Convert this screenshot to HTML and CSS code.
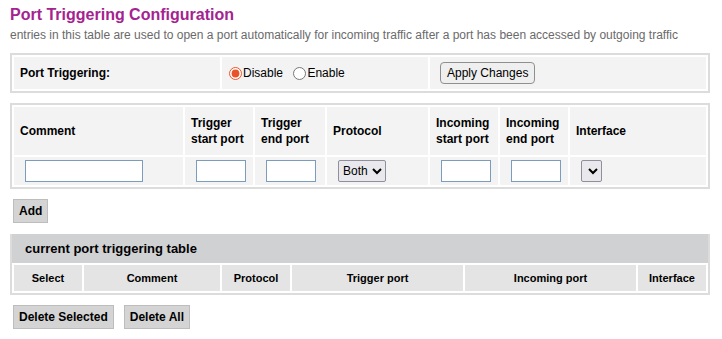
FILE: index.html
```html
<!DOCTYPE html>
<html lang="en">
<head>
  <meta charset="UTF-8">
  <title>Port Triggering Configuration</title>
  <link rel="stylesheet" href="styles.css">
</head>
<body>

  <!-- JUDUL -->
  <h2 class="page-title">Port Triggering Configuration</h2>
  <p class="page-desc">entries in this table are used to open a port automatically for incoming traffic after a port has been accessed by outgoing traffic</p>

  <!-- ENABLE / DISABLE -->
  <table class="box-table switch-table">
    <tr>
      <td class="label-cell">Port Triggering:</td>
      <td class="radio-cell">
        <label class="radio"><input type="radio" name="trigger" checked>Disable</label>
        <label class="radio"><input type="radio" name="trigger">Enable</label>
      </td>
      <td><button class="native-btn">Apply Changes</button></td>
    </tr>
  </table>

  <!-- INPUT ENTRY -->
  <table class="box-table entry-table">
    <tr class="head-row">
      <th class="col-comment">Comment</th>
      <th class="col-port">Trigger<br>start port</th>
      <th class="col-port2">Trigger<br>end port</th>
      <th class="col-proto">Protocol</th>
      <th class="col-port">Incoming<br>start port</th>
      <th class="col-port">Incoming<br>end port</th>
      <th>Interface</th>
    </tr>
    <tr class="input-row">
      <td><input type="text" class="txt txt-wide"></td>
      <td><input type="text" class="txt txt-port"></td>
      <td><input type="text" class="txt txt-port"></td>
      <td>
        <select class="sel">
          <option>Both</option>
          <option>TCP</option>
          <option>UDP</option>
        </select>
      </td>
      <td><input type="text" class="txt txt-port"></td>
      <td><input type="text" class="txt txt-port"></td>
      <td><select class="sel sel-empty"><option></option></select></td>
    </tr>
  </table>

  <button class="flat-btn add-btn">Add</button>

  <!-- TABEL SAAT INI -->
  <div class="list-box">
    <div class="list-title">current port triggering table</div>
    <table class="list-table">
      <tr>
        <th class="w-select">Select</th>
        <th class="w-comment">Comment</th>
        <th class="w-proto">Protocol</th>
        <th class="w-port">Trigger port</th>
        <th class="w-port">Incoming port</th>
        <th>Interface</th>
      </tr>
    </table>
  </div>

  <div class="btn-row">
    <button class="flat-btn">Delete Selected</button>
    <button class="flat-btn">Delete All</button>
  </div>

</body>
</html>
```

FILE: styles.css
```css
/* DASAR */
* {
  box-sizing: border-box;
}
body {
  margin: 0;
  padding: 5px 10px;
  font-family: "Liberation Sans", Arial, sans-serif;
  font-size: 12px;
  color: #000;
  background: #fff;
}
.page-title {
  margin: 0;
  font-size: 16px;
  line-height: 20px;
  color: #a4238f;
}
.page-desc {
  margin: 1px 0 0;
  font-size: 12px;
  line-height: 18px;
  color: #6a6a6a;
  white-space: nowrap;
}

/* ----- TABEL KOTAK ----- */
.box-table {
  width: 700px;
  border: 2px solid #dcdcdc;
  border-spacing: 2px;
  margin-top: 9px;
  table-layout: fixed;
}
.box-table td,
.box-table th {
  background: #f3f3f3;
  text-align: left;
  padding: 0 6px;
}
.switch-table td {
  height: 32px;
}
.switch-table .label-cell {
  width: 206px;
  font-weight: bold;
}
.switch-table .radio-cell {
  width: 206px;
  padding-top: 3px;
}
.radio {
  display: inline-flex;
  align-items: center;
  margin-right: 6px;
}
.radio input {
  margin: 0 1px 0 1px;
  accent-color: #e8542a;
}
.native-btn {
  font-family: "Liberation Sans", Arial, sans-serif;
  font-size: 12px;
  margin-left: 4px;
  padding: 3px 6px;
  border: 1px solid #8f8f8f;
  border-radius: 4px;
  background: #efefef;
}

.entry-table {
  margin-top: 10px;
}
.entry-table th {
  height: 48px;
  font-weight: bold;
  line-height: 16px;
}
.entry-table td {
  height: 28px;
  padding-left: 11px;
}
.col-comment { width: 169px; }
.col-port { width: 68px; }
.col-port2 { width: 70px; }
.col-proto { width: 101px; }
.txt {
  height: 22px;
  border: 1px solid #7b9cbd;
  font-size: 12px;
  vertical-align: middle;
}
.txt-wide { width: 118px; }
.txt-port { width: 50px; }
.sel {
  font-family: "Liberation Sans", Arial, sans-serif;
  font-size: 12px;
  height: 22px;
  margin: 0;
  vertical-align: middle;
  background: #e9e9ed;
  border: 1px solid #8f8f9d;
  border-radius: 2px;
}
.sel-empty {
  width: 21px;
}

/* ----- TOMBOL DATAR ----- */
.flat-btn {
  font-family: "Liberation Sans", Arial, sans-serif;
  font-size: 12px;
  font-weight: bold;
  background: #d4d4d4;
  border: 1px solid #bdbdbd;
  padding: 0 5px;
  height: 24px;
  cursor: pointer;
}
.add-btn {
  display: block;
  margin: 10px 0 0 3px;
}

/* ----- TABEL SAAT INI ----- */
.list-box {
  width: 700px;
  margin-top: 11px;
  border: 2px solid #dcdcdc;
  border-top: none;
}
.list-title {
  background: #d0d1d3;
  font-size: 13px;
  font-weight: bold;
  padding: 0 13px;
  height: 29px;
  line-height: 29px;
}
.list-table {
  width: 100%;
  border-spacing: 2px;
  table-layout: fixed;
}
.list-table th {
  background: #e4e4e4;
  font-size: 11px;
  height: 26px;
  text-align: center;
}
.w-select { width: 68px; }
.w-comment { width: 136px; }
.w-proto { width: 68px; }
.w-port { width: 171px; }

.btn-row {
  display: flex;
  gap: 10px;
  margin: 10px 0 0 3px;
}
```
